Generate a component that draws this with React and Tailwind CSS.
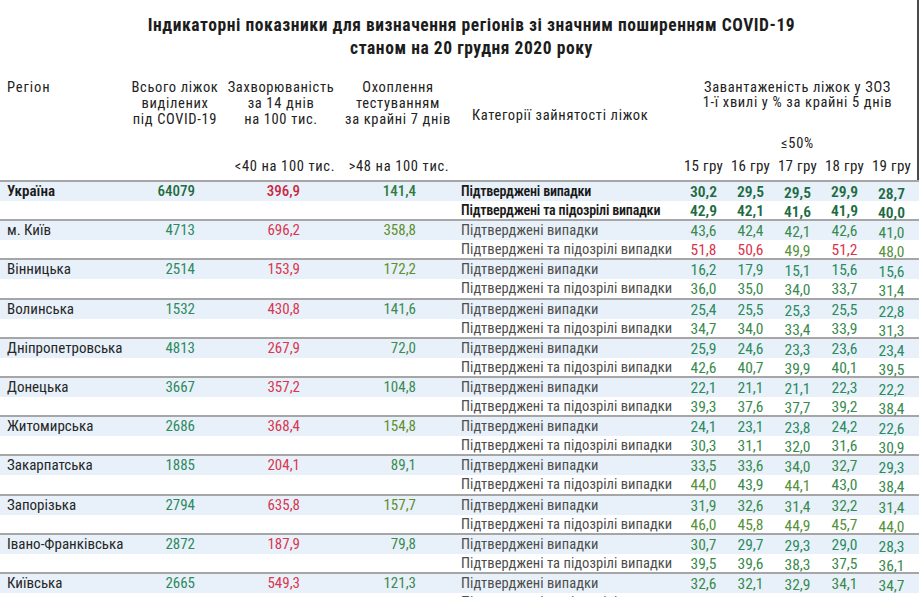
import React from 'react';

const COLS = 'grid grid-cols-[125px_75px_105px_156px_219px_47px_47px_47px_47px_47px_1fr]';

const rows = [
  { name: 'Україна', beds: '64079', morb: '396,9', test: '141,4', c: ['30,2', '29,5', '29,5', '29,9', '28,7'], s: ['42,9', '42,1', '41,6', '41,9', '40,0'], total: true },
  { name: 'м. Київ', beds: '4713', morb: '696,2', test: '358,8', c: ['43,6', '42,4', '42,1', '42,6', '41,0'], s: ['51,8', '50,6', '49,9', '51,2', '48,0'] },
  { name: 'Вінницька', beds: '2514', morb: '153,9', test: '172,2', c: ['16,2', '17,9', '15,1', '15,6', '15,6'], s: ['36,0', '35,0', '34,0', '33,7', '31,4'] },
  { name: 'Волинська', beds: '1532', morb: '430,8', test: '141,6', c: ['25,4', '25,5', '25,3', '25,5', '22,8'], s: ['34,7', '34,0', '33,4', '33,9', '31,3'] },
  { name: 'Дніпропетровська', beds: '4813', morb: '267,9', test: '72,0', c: ['25,9', '24,6', '23,3', '23,6', '23,4'], s: ['42,6', '40,7', '39,9', '40,1', '39,5'] },
  { name: 'Донецька', beds: '3667', morb: '357,2', test: '104,8', c: ['22,1', '21,1', '21,1', '22,3', '22,2'], s: ['39,3', '37,6', '37,7', '39,2', '38,4'] },
  { name: 'Житомирська', beds: '2686', morb: '368,4', test: '154,8', c: ['24,1', '23,1', '23,8', '24,2', '22,6'], s: ['30,3', '31,1', '32,0', '31,6', '30,9'] },
  { name: 'Закарпатська', beds: '1885', morb: '204,1', test: '89,1', c: ['33,5', '33,6', '34,0', '32,7', '29,3'], s: ['44,0', '43,9', '44,1', '43,0', '38,4'] },
  { name: 'Запорізька', beds: '2794', morb: '635,8', test: '157,7', c: ['31,9', '32,6', '31,4', '32,2', '31,4'], s: ['46,0', '45,8', '44,9', '45,7', '44,0'] },
  { name: 'Івано-Франківська', beds: '2872', morb: '187,9', test: '79,8', c: ['30,7', '29,7', '29,3', '29,0', '28,3'], s: ['39,5', '39,6', '38,3', '37,5', '36,1'] },
  { name: 'Київська', beds: '2665', morb: '549,3', test: '121,3', c: ['32,6', '32,1', '32,9', '34,1', '34,7'], s: ['44,2', '43,6', '44,0', '45,1', '45,3'] },
];

// small downward drift of the day values, like in the source sheet
const drift = ['pt-[1px]', 'pt-[1px]', 'pt-[2px]', 'pt-[1px]', 'pt-[3px]'];

function dayColor(v, total) {
  const n = parseFloat(v.replace(',', '.'));
  if (n >= 50) return 'text-[#d9344c]';
  if (total) return 'text-[#1d6b43] font-semibold';
  if (n < 30) return 'text-[#2b8a5e]';
  if (n < 44) return 'text-[#3a8a4e]';
  return 'text-[#56903a]';
}

function testColor(v) {
  const n = parseFloat(v.replace(',', '.'));
  return n > 150 ? 'text-[#5f8f2e]' : 'text-[#3b8a52]';
}

function Region({ r }) {
  const cat = r.total
    ? 'text-[#1a1a1a] font-semibold text-[14px] tracking-[-0.2px]'
    : 'text-[#4d4d4d] text-[14.5px] tracking-[0.05px]';
  return (
    <div className="border-t-2 border-[#a6a6a6]">
      <div className={`${COLS} h-[19px] bg-[#e8f1fa] leading-[19px] whitespace-nowrap`}>
        <div className={`pl-[7px] text-[15px] ${r.total ? 'font-semibold text-[#1a1a1a]' : 'text-[#262626]'}`}>{r.name}</div>
        <div className={`text-right pr-[5px] text-[15px] ${r.total ? 'text-[#1f6b40] font-medium' : 'text-[#2e8a5e]'}`}>{r.beds}</div>
        <div className={`text-right pr-[5px] text-[15px] ${r.total ? 'text-[#c8283e] font-medium' : 'text-[#d8374f]'}`}>{r.morb}</div>
        <div className={`text-right pr-[45px] text-[15px] ${r.total ? 'text-[#2f7a3f] font-medium' : testColor(r.test)}`}>{r.test}</div>
        <div className={cat}>Підтверджені випадки</div>
        {r.c.map((v, i) => (
          <div key={i} className={`text-center text-[15.5px] ${drift[i]} ${dayColor(v, r.total)}`}>{v}</div>
        ))}
        <div />
      </div>
      <div className={`${COLS} h-[18.2px] bg-white leading-[19px] whitespace-nowrap`}>
        <div />
        <div />
        <div />
        <div />
        <div className={cat}>Підтверджені та підозрілі випадки</div>
        {r.s.map((v, i) => (
          <div key={i} className={`text-center text-[15.5px] ${drift[i]} ${dayColor(v, r.total)}`}>{v}</div>
        ))}
        <div />
      </div>
    </div>
  );
}

export default function App() {
  return (
    <div className="w-[919px] h-[597px] overflow-hidden bg-white text-[#222] font-['Roboto_Condensed','Liberation_Sans_Narrow','Arial_Narrow',Roboto,sans-serif]">
      {/* HEADER */}
      <div className="h-[180px] border-r-2 border-[#4a4a4a]">
        <div className="pt-[14px] pl-[26px] text-center text-[17.5px] font-bold leading-[23px] tracking-[0.55px] text-[#1c1c1c]">
          <div>Індикаторні показники для визначення регіонів зі значним поширенням COVID-19</div>
          <div>станом на 20 грудня 2020 року</div>
        </div>

        <div className="mt-[20px] grid grid-cols-[130px_90px_122px_112px_226px_235px] text-[14.5px] leading-4 tracking-[0.65px] whitespace-nowrap">
          <div className="pl-[7px] tracking-[0.9px]">Регіон</div>
          <div className="flex flex-col items-center">
            <span>Всього ліжок</span>
            <span>виділених</span>
            <span>під COVID-19</span>
          </div>
          <div className="flex flex-col items-center">
            <span>Захворюваність</span>
            <span>за 14 днів</span>
            <span>на 100 тис.</span>
            <span className="mt-[31px] pl-[8px]">&lt;40 на 100 тис.</span>
          </div>
          <div className="flex flex-col items-center">
            <span>Охоплення</span>
            <span>тестуванням</span>
            <span>за крайні 7 днів</span>
            <span className="mt-[31px] pl-[2px]">&gt;48 на 100 тис.</span>
          </div>
          <div className="pl-[18px] pt-[28px]">Категорії зайнятості ліжок</div>
          <div className="flex flex-col items-center leading-[15px]">
            <span>Завантаженість ліжок у ЗОЗ</span>
            <span>1-ї хвилі у % за крайні 5 днів</span>
            <span className="mt-[26px] leading-4">≤50%</span>
            <div className="mt-[6px] grid w-full grid-cols-5 text-[15px] leading-4 tracking-[0.3px]">
              {['15', '16', '17', '18', '19'].map((d) => (
                <span key={d} className="text-center">{d} гру</span>
              ))}
            </div>
          </div>
        </div>
      </div>

      {/* BODY */}
      <div>
        {rows.map((r) => (
          <Region key={r.name} r={r} />
        ))}
      </div>
    </div>
  );
}
